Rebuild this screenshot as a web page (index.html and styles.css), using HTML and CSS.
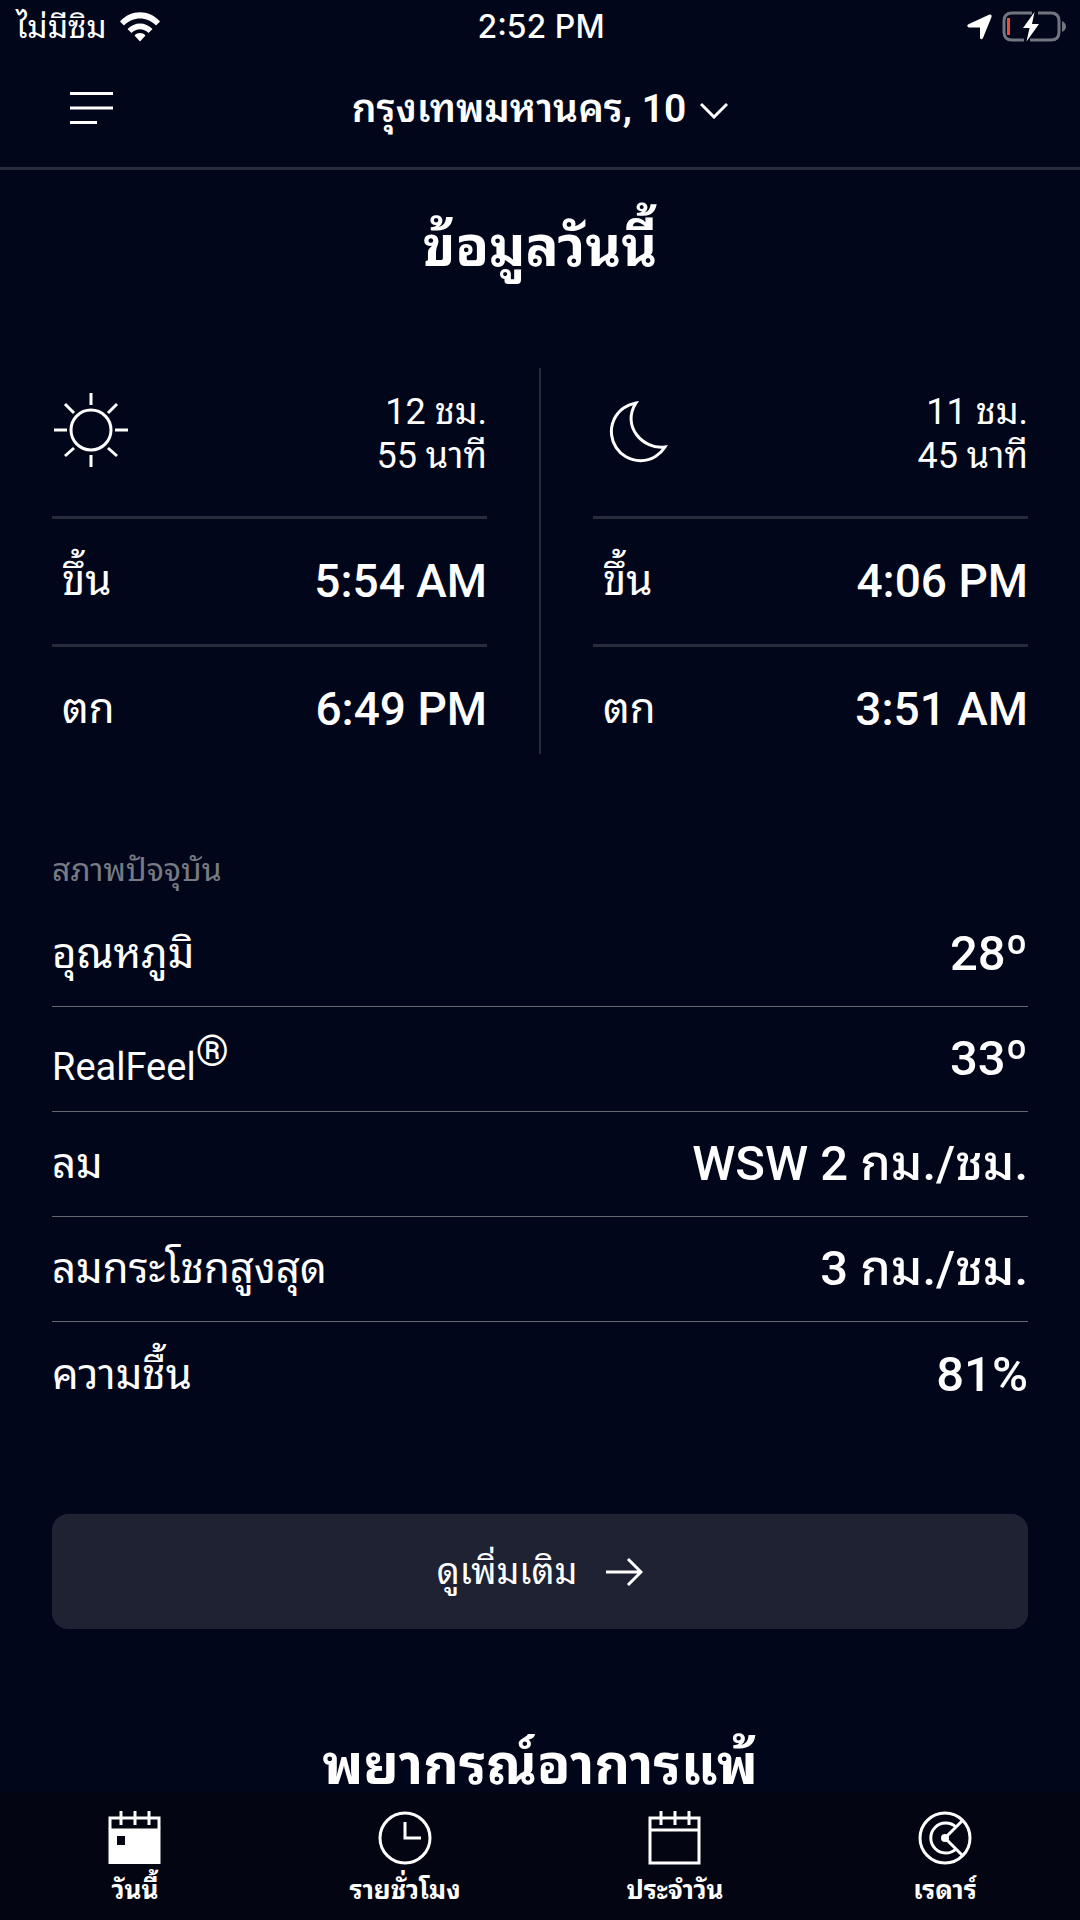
FILE: index.html
```html
<!DOCTYPE html>
<html lang="th">
<head>
<meta charset="utf-8">
<meta name="viewport" content="width=device-width, initial-scale=1">
<title>ข้อมูลวันนี้</title>
<link rel="stylesheet" href="styles.css">
</head>
<body>
<div class="app">
  <div class="status">
    <div class="status-left">
      <span class="carrier">ไม่มีซิม</span>
      <svg class="wifi" viewBox="0 0 40 30" aria-hidden="true"><path d="M0 9.500C11-2.700 29-2.700 40 9.500L36 13.500C27 4.300 13 4.300 4 13.500ZM7.500 17C14.500 9.500 25.500 9.500 32.500 17L28.500 21C23.500 16 16.500 16 11.500 21ZM14.500 23.500C17.700 20.300 22.300 20.300 25.500 23.500L20 29.500Z"/></svg>
    </div>
    <time class="clock">2:52 PM</time>
    <div class="status-right">
      <svg class="location" viewBox="0 0 25 26" aria-hidden="true"><path d="M22.500.600Q25 0 24.600 2.800L16 24Q14.400 26.500 13 24V13.500H1.600Q-1 12 1.400 10.200Z"/></svg>
      <svg class="battery" viewBox="0 0 64 32" aria-hidden="true">
        <path class="shell" d="M30 2H10Q2 2 2 10V21Q2 29 10 29H22M28 29H49Q57 29 57 21V10Q57 2 49 2H36"/>
        <path class="tip" d="M60 10Q64 12 64 15.500T60 21Z"/>
        <rect class="level" x="5" y="7" width="3" height="17"/>
        <path class="bolt" d="M32.500 1L21 17H27.500L24.500 30.500L37 13H30Z"/>
      </svg>
    </div>
  </div>
  <header class="header">
    <button class="menu" type="button" aria-label="เมนู"><svg viewBox="0 0 43 33" aria-hidden="true"><path d="M0 1.500H43M0 16H43M0 30.500H27"/></svg></button>
    <button class="place" type="button">กรุงเทพมหานคร, 10<svg viewBox="0 0 28 20" aria-hidden="true"><path d="M1 5L14 18L27 5"/></svg></button>
  </header>
  <main class="content">
    <h1 class="title">ข้อมูลวันนี้</h1>
    <section class="sky">
      <div class="body">
        <div class="summary">
          <svg class="sky-icon" viewBox="0 0 78 76" aria-hidden="true"><circle cx="39" cy="38" r="20"/><path d="M39 1V13M39 63V75M2 38H15M63 38H76M13 12L22 21M56 56L65 64M13 64L22 56M56 21L65 12"/></svg>
          <p class="duration">12 ชม.<br>55 นาที</p>
        </div>
        <dl class="times">
          <div class="time-row"><dt>ขึ้น</dt><dd>5:54 AM</dd></div>
          <div class="time-row"><dt>ตก</dt><dd>6:49 PM</dd></div>
        </dl>
      </div>
      <div class="divider"></div>
      <div class="body">
        <div class="summary">
          <svg class="sky-icon" viewBox="0 0 78 76" aria-hidden="true"><path d="M43 11A29 29 0 1 0 72 55C50 58 28 34 43 11Z"/></svg>
          <p class="duration">11 ชม.<br>45 นาที</p>
        </div>
        <dl class="times">
          <div class="time-row"><dt>ขึ้น</dt><dd>4:06 PM</dd></div>
          <div class="time-row"><dt>ตก</dt><dd>3:51 AM</dd></div>
        </dl>
      </div>
    </section>
    <section class="current">
      <h2 class="caption">สภาพปัจจุบัน</h2>
      <dl class="readings">
        <div class="reading"><dt>อุณหภูมิ</dt><dd>28º</dd></div>
        <div class="reading"><dt class="brand">RealFeel<sup>®</sup></dt><dd>33º</dd></div>
        <div class="reading"><dt>ลม</dt><dd>WSW 2 กม./ชม.</dd></div>
        <div class="reading"><dt>ลมกระโชกสูงสุด</dt><dd>3 กม./ชม.</dd></div>
        <div class="reading"><dt>ความชื้น</dt><dd>81%</dd></div>
      </dl>
    </section>
    <button class="more" type="button">ดูเพิ่มเติม<svg viewBox="0 0 38 30" aria-hidden="true"><path d="M1 15H36M23 2L36 15L23 28"/></svg></button>
    <h2 class="title allergy">พยากรณ์อาการแพ้</h2>
  </main>
  <nav class="tabs">
    <a class="tab" href="#today" aria-current="page"><svg viewBox="0 0 54 54" aria-hidden="true"><path d="M2 18V7H51V18M13 0V14M27 0V14M41 0V14"/><path class="fill" fill-rule="evenodd" d="M.500 17.500H52.500V53H.500ZM9 25V34H17V25Z"/></svg>วันนี้</a>
    <a class="tab" href="#hourly"><svg viewBox="0 0 54 54" aria-hidden="true"><circle cx="27" cy="27" r="25"/><path d="M27 11V27H43"/></svg>รายชั่วโมง</a>
    <a class="tab" href="#daily"><svg viewBox="0 0 54 54" aria-hidden="true"><path d="M2 7H51V52H2ZM2 19H51M13 0V14M27 0V14M41 0V14"/></svg>ประจำวัน</a>
    <a class="tab" href="#radar"><svg viewBox="0 0 54 54" aria-hidden="true"><circle cx="27" cy="27" r="25"/><path d="M38 16A15 15 0 1 0 38 38M45 9L27 27L45 45"/><circle class="fill" cx="27" cy="27" r="4"/></svg>เรดาร์</a>
  </nav>
</div>
</body>
</html>
```
FILE: styles.css
```css
* { box-sizing: border-box; }

body {
  margin: 0;
  background: #01061a;
  color: #fff;
  font-family: Roboto, "Noto Sans Thai Looped", Loma, "Noto Sans Thai", sans-serif;
  line-height: 48px;
}

h1, h2, p, dl, dd { margin: 0; }

button {
  border: 0;
  padding: 0;
  background: none;
  color: inherit;
  font: inherit;
}

svg {
  display: block;
  flex: none;
  fill: none;
  stroke: #fff;
  stroke-width: 3px;
}

.app {
  display: flex;
  flex-direction: column;
  min-height: 100vh;
}

/* Status bar */
.status {
  display: grid;
  grid-template-columns: 1fr auto 1fr;
  align-items: center;
  height: 54px;
  padding: 0 14px 0 16px;
}

.status-left, .status-right {
  display: flex;
  align-items: center;
  gap: 10px;
}

.status-left { gap: 13px; }
.status-right { justify-content: flex-end; }

.carrier { font-size: 32px; }

.clock {
  font-family: Inter, sans-serif;
  font-size: 32px;
  font-weight: 500;
}

.status svg { stroke: none; fill: #fff; }
.wifi { width: 40px; height: 30px; }
.location { width: 25px; height: 26px; }
.battery { width: 64px; height: 32px; }
.battery .shell { fill: none; stroke: #72747e; stroke-width: 3px; }
.battery .tip { fill: #72747e; }
.battery .level { fill: #ed4b3b; }

/* Header */
.header {
  display: grid;
  grid-template-columns: 1fr auto 1fr;
  align-items: center;
  height: 116px;
  padding: 0 70px 4px;
  border-bottom: 3px solid #272c3b;
}

.menu svg { width: 43px; height: 33px; }

.place {
  display: flex;
  align-items: center;
  gap: 14px;
  font-size: 39px;
  font-weight: 600;
}

.place svg { width: 28px; height: 20px; }

/* Content */
.content {
  flex: 1;
  padding: 50px 52px 0;
}

.title {
  font-size: 55px;
  font-weight: 700;
  line-height: 54px;
  text-align: center;
}

.sky {
  display: grid;
  grid-template-columns: 1fr 2px 1fr;
  column-gap: 52px;
  margin-top: 94px;
}

.divider { background: #272c3b; }

.summary {
  display: flex;
  justify-content: space-between;
  align-items: center;
  height: 148px;
  padding-bottom: 24px;
}

.sky-icon { width: 78px; height: 76px; }

.duration {
  margin-top: 8px;
  font-size: 36px;
  line-height: 44px;
  text-align: right;
}

.time-row {
  display: flex;
  justify-content: space-between;
  align-items: center;
  padding: 38px 0 39px 10px;
  border-top: 3px solid #272c3b;
}

.time-row:last-child { padding-bottom: 21px; }
.time-row dt { font-size: 42px; }
.time-row dd { font-size: 46px; font-weight: 500; }

.current { margin-top: 92px; }

.caption {
  color: #777983;
  font-size: 32px;
  font-weight: 400;
}

.readings { margin-top: 8px; }

.reading {
  display: flex;
  justify-content: space-between;
  align-items: center;
  height: 105px;
  border-bottom: 1px solid #65666f;
}

.reading:last-child { border-bottom: 0; }
.reading dt { font-size: 42px; }
.reading .brand { font-size: 38px; }
.reading sup { font-size: 42px; }
.reading dd { font-size: 49px; font-weight: 500; }

.more {
  display: flex;
  justify-content: center;
  align-items: center;
  gap: 28px;
  width: 100%;
  height: 115px;
  margin-top: 87px;
  border-radius: 16px;
  background: #1e2233;
  font-size: 36px;
}

.more svg { width: 38px; height: 30px; }

.allergy { margin-top: 109px; }

/* Tab bar */
.tabs {
  position: sticky;
  bottom: 0;
  display: grid;
  grid-template-columns: repeat(4, 1fr);
  height: 128px;
  padding-top: 19px;
  background: #030612;
}

.tab {
  display: flex;
  flex-direction: column;
  align-items: center;
  color: #fff;
  font-size: 26px;
  font-weight: 700;
  line-height: 50px;
  text-decoration: none;
}

.tab svg { width: 54px; height: 54px; }
.tab .fill { fill: #fff; stroke: none; }
```
